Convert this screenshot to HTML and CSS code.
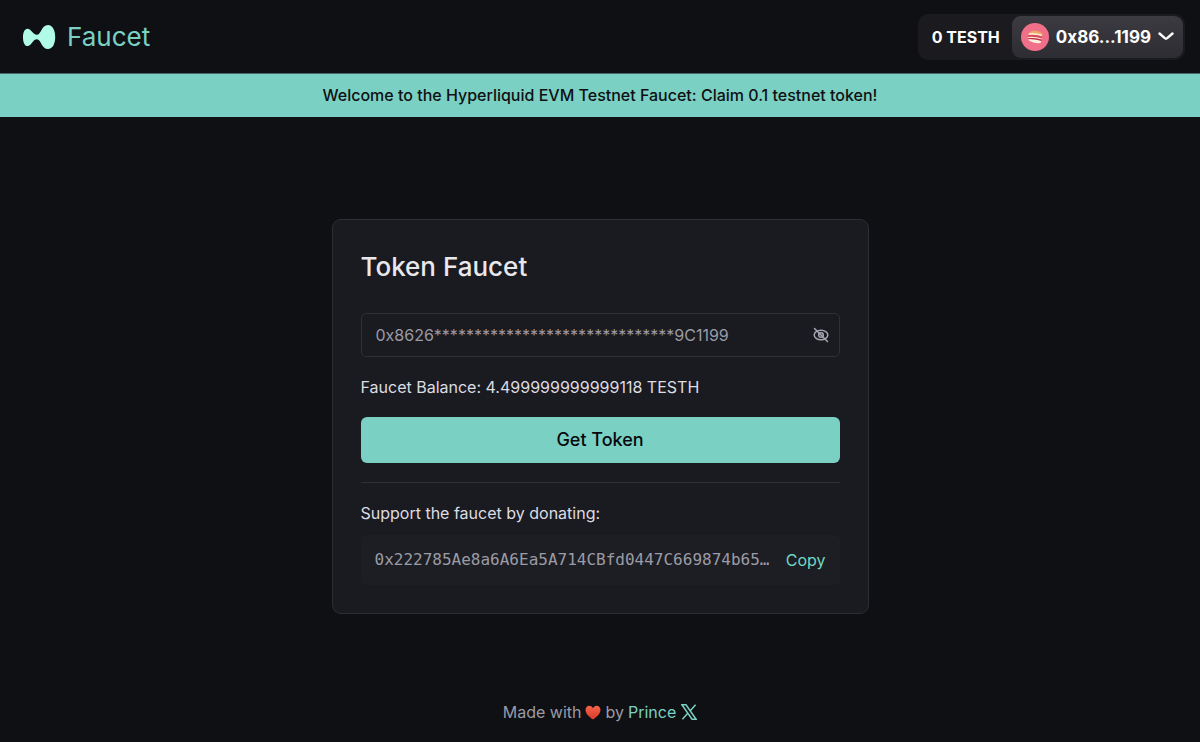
FILE: index.html
```html
<!DOCTYPE html>
<html lang="en">
  <head>
    <meta charset="UTF-8" />
    <meta name="viewport" content="width=device-width, initial-scale=1.0" />
    <title>Faucet</title>
    <link rel="stylesheet" href="styles.css" />
  </head>
  <body>
    <header class="header">
      <a href="#" class="logo">
        <svg class="logo-icon" viewBox="0 0 34 26" aria-hidden="true">
          <path
            d="M5.500 4.800C9.500 4.800 10.500 10.800 15 10.800C19 10.800 19.500 1 26 1C30.500 1 33.200 6 33.200 13C33.200 20 30.500 25 26 25C19.500 25 19 15.200 15 15.200C10.500 15.200 9.500 22 5.500 22C2.500 22 1 18 1 13.400C1 8.500 2.500 4.800 5.500 4.800Z"
          />
        </svg>
        <span>Faucet</span>
      </a>
      <div class="wallet">
        <span class="wallet-balance">0 TESTH</span>
        <button type="button" class="wallet-account">
          <svg class="avatar" viewBox="0 0 28 28" aria-hidden="true">
            <circle cx="14" cy="14" r="14" fill="#f0708a" />
            <path d="M8.500 9.500C10 7 18.500 7 21 10.500C21.600 11.500 21.500 12.300 20.800 12.600L8 10.800Z" fill="#eda766" />
            <path d="M7.800 10.300Q14 9.300 21 11.600L20.800 13.300Q14 11.300 7.500 12.200Z" fill="#fbe9d0" />
            <path d="M7.300 12Q14 11 21 13.400L20.800 15.800Q14 13.500 7 14.200Z" fill="#d8495a" />
            <path d="M7 14Q14 13 20.800 15.600L20.600 16.800Q14 14.600 6.900 15.200Z" fill="#f8ded0" />
            <path d="M6.900 15.200Q14 14.300 20.600 16.600L20.400 18.200Q14 16 6.900 16.500Z" fill="#bd2f45" />
            <path d="M6.800 16.300Q14 15.600 20.300 18.100Q20.300 20.500 17.500 20.300Q10 20 6.800 16.300Z" fill="#fdeedd" />
          </svg>
          <span>0x86...1199</span>
          <svg class="chevron" viewBox="0 0 16 9" aria-hidden="true">
            <path d="M1.500 1.500L6.800 6.200Q8 7.200 9.200 6.200L14.500 1.500" />
          </svg>
        </button>
      </div>
    </header>

    <div class="banner">
      Welcome to the Hyperliquid EVM Testnet Faucet: Claim 0.1 testnet token!
    </div>

    <main class="main">
      <section class="card">
        <h1>Token Faucet</h1>
        <div class="address-field">
          <input
            type="text"
            aria-label="Wallet address"
            value="0x8626******************************9C1199"
            readonly
          />
          <button type="button" class="eye" aria-label="Show address">
            <svg viewBox="0 0 16 16" aria-hidden="true">
              <ellipse cx="8" cy="8" rx="6.800" ry="4.800" />
              <circle cx="8" cy="8" r="2.300" />
              <path d="M1.500 1.500L14.500 14.500" />
            </svg>
          </button>
        </div>
        <p class="balance">Faucet Balance: 4.499999999999118 TESTH</p>
        <button type="button" class="claim">Get Token</button>
        <hr />
        <p class="donate-label">Support the faucet by donating:</p>
        <div class="donate">
          <code>0x222785Ae8a6A6Ea5A714CBfd0447C669874b65…</code>
          <button type="button" class="copy">Copy</button>
        </div>
      </section>
    </main>

    <footer class="footer">
      <span>Made with</span>
      <svg class="heart" viewBox="0 0 16 15" aria-hidden="true">
        <defs>
          <linearGradient id="heart-fill" x1="0" y1="0" x2="0" y2="1">
            <stop offset="0" stop-color="#f5634a" />
            <stop offset="1" stop-color="#dc3a28" />
          </linearGradient>
        </defs>
        <path
          d="M8 14.500C5 12.500 .500 9 .500 4.800C.500 2.400 2.200 .700 4.300 .700C6 .700 7.300 1.700 8 3.200C8.700 1.700 10 .700 11.700 .700C13.800 .700 15.500 2.400 15.500 4.800C15.500 9 11 12.500 8 14.500Z"
          fill="url(#heart-fill)"
        />
      </svg>
      <span>by</span>
      <a href="#" class="author">
        <span>Prince</span>
        <svg class="x-icon" viewBox="0 0 16 16" aria-hidden="true">
          <path d="M.900 .800H5L15.100 15.200H11ZM14.600 .800L8.800 7.200M7 9.100L1.400 15.200" />
        </svg>
      </a>
    </footer>
  </body>
</html>
```
FILE: styles.css
```css
* {
  box-sizing: border-box;
  margin: 0;
}
body {
  display: flex;
  flex-direction: column;
  min-height: 100vh;
  background-color: #0f1014;
  color: #dddde1;
  font-family: Inter, "Liberation Sans", sans-serif;
  font-size: 16px;
  line-height: 24px;
}
button {
  border: none;
  padding: 0;
  font: inherit;
  cursor: pointer;
}
a {
  color: #7ad0c2;
  text-decoration: none;
}

.header {
  display: flex;
  align-items: center;
  justify-content: space-between;
  height: 73px;
  padding: 0 15px 0 22px;
}
.logo {
  display: flex;
  align-items: center;
  gap: 11px;
  font-size: 26px;
  line-height: 32px;
}
.logo-icon {
  width: 34px;
  height: 26px;
  fill: #b0fbe8;
}

.wallet {
  display: flex;
  align-items: center;
  padding: 2px;
  border-radius: 10px;
  background-color: #1a1a1f;
  color: #fff;
  font-weight: 700;
}
.wallet-balance {
  padding: 0 12px;
}
.wallet-account {
  display: flex;
  align-items: center;
  gap: 7px;
  height: 42px;
  padding: 0 9px;
  border-radius: 9px;
  background: linear-gradient(#3c3b41, #2d2c32);
  color: #fff;
  font-size: 17px;
}
.avatar {
  width: 28px;
  height: 28px;
}
.chevron {
  width: 16px;
  height: 9px;
  fill: none;
  stroke: #fff;
  stroke-width: 2.4;
  stroke-linecap: round;
}

.banner {
  padding: 9px 16px 10px;
  border-top: 1px solid #4a6a69;
  background-color: #7ad0c2;
  color: #0f1014;
  font-weight: 500;
  text-align: center;
}

.main {
  display: flex;
  flex: 1;
  justify-content: center;
  align-items: center;
  padding: 102px 16px 86px;
}
.card {
  width: 100%;
  max-width: 537px;
  padding: 28px;
  border: 1px solid #2d2e32;
  border-radius: 9px;
  background-color: #1a1a21;
}
h1 {
  margin-bottom: 27px;
  color: #e8e8ec;
  font-size: 26px;
  font-weight: 500;
  line-height: 38px;
}
.address-field {
  display: flex;
  align-items: center;
  height: 44px;
  margin-bottom: 18px;
  padding: 0 10px 0 14px;
  border: 1px solid #2f3034;
  border-radius: 5px;
}
.address-field input {
  flex: 1;
  min-width: 0;
  padding: 0;
  border: none;
  outline: none;
  background: none;
  color: #9b9ba5;
  font: inherit;
}
.eye {
  display: flex;
  background: none;
}
.eye svg {
  width: 16px;
  height: 16px;
  fill: none;
  stroke: #a6a6b2;
  stroke-width: 1.5;
  stroke-linecap: round;
}
.balance {
  margin-bottom: 18px;
}
.claim {
  display: block;
  width: 100%;
  height: 46px;
  border-radius: 6px;
  background-color: #7ad0c2;
  color: #08090c;
  font-size: 18px;
  font-weight: 500;
}
hr {
  margin: 19px 0 18px;
  border: none;
  border-top: 1px solid #2f3034;
}
.donate-label {
  margin-bottom: 10px;
}
.donate {
  display: flex;
  align-items: center;
  justify-content: space-between;
  height: 50px;
  padding: 0 14px;
  border-radius: 5px;
  background-color: #1d1e23;
}
.donate code {
  overflow: hidden;
  color: #9b9ba5;
  font-family: "DejaVu Sans Mono", monospace;
  font-size: 16px;
  text-overflow: ellipsis;
  white-space: nowrap;
}
.copy {
  background: none;
  color: #6fd9c3;
}

.footer {
  display: flex;
  align-items: center;
  justify-content: center;
  gap: 4px;
  padding: 0 16px 18px;
  color: #9b9ba5;
}
.heart {
  width: 16px;
  height: 15px;
}
.author {
  display: flex;
  align-items: center;
  gap: 5px;
}
.x-icon {
  width: 16px;
  height: 16px;
  fill: none;
  stroke: #7ad0c2;
  stroke-width: 1.5;
}
```
